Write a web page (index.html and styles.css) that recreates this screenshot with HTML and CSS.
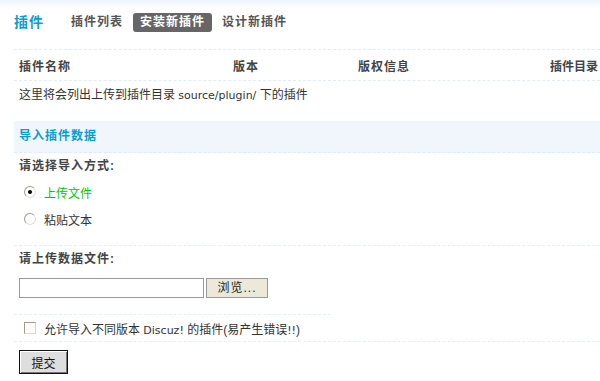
FILE: index.html
```html
<!DOCTYPE html>
<html lang="zh-CN">

<head>
    <meta charset="UTF-8">
    <title>插件</title>
    <link rel="stylesheet" href="styles.css">
</head>

<body>
    <div class="topbar">
        <h3 class="page-title">插件</h3>
        <ul class="tabs">
            <li><a href="#">插件列表</a></li>
            <li class="current"><a href="#">安装新插件</a></li>
            <li><a href="#">设计新插件</a></li>
        </ul>
    </div>

    <div class="main">
        <div class="list-head">
            <div class="cell">插件名称</div>
            <div class="cell">版本</div>
            <div class="cell">版权信息</div>
            <div class="cell last">插件目录</div>
        </div>
        <div class="list-note">这里将会列出上传到插件目录 <span class="en">source/plugin/</span> 下的插件</div>

        <div class="panel-title">导入插件数据</div>

        <div class="section">
            <div class="label">请选择导入方式:</div>
            <label class="option first">
                <span class="radio checked"></span>
                <span class="on">上传文件</span>
            </label>
            <label class="option">
                <span class="radio"></span>
                <span>粘贴文本</span>
            </label>
        </div>

        <div class="section upload">
            <div class="label">请上传数据文件:</div>
            <div class="file-row">
                <span class="file-box"></span>
                <span class="file-btn">浏览...</span>
            </div>
        </div>

        <div class="short-line"></div>
        <label class="option allow">
            <span class="checkbox"></span>
            <span>允许导入不同版本 <span class="en">Discuz!</span> 的插件(易产生错误<span class="en">!!</span>)</span>
        </label>

        <div class="submit-row">
            <button class="btn" type="button">提交</button>
        </div>
    </div>
</body>

</html>
```

FILE: styles.css
```css
body {
    margin: 0;
    font-family: "Liberation Sans", "Noto Sans CJK SC", sans-serif;
    font-size: 12px;
    color: #333;
    background: #fff;
}

/* 西文部分用类似 Verdana 的字体 */
.en {
    font-family: "DejaVu Sans", sans-serif;
    font-size: 11px;
}

/* 顶部标题和选项卡 */
.topbar {
    height: 49px;
    box-sizing: border-box;
    padding: 13px 0 0 14px;
    display: flex;
    align-items: flex-start;
    background: linear-gradient(#eef5fc, #fff 9px);
}

.page-title {
    margin: 0;
    height: 19px;
    line-height: 19px;
    font-size: 14px;
    color: #0a9dcf;
    font-weight: bold;
    letter-spacing: 1px;
}

.tabs {
    list-style: none;
    margin: 0 0 0 27px;
    padding: 0;
    display: flex;
    gap: 10px;
}

.tabs a {
    display: block;
    height: 19px;
    line-height: 19px;
    border-radius: 3px;
    color: #555;
    font-weight: bold;
    letter-spacing: 1px;
    text-decoration: none;
}

.tabs .current a {
    padding: 0 7px;
    background: #666;
    color: #fff;
}

.main {
    margin-left: 14px;
}

/* 插件列表 */
.list-head {
    display: grid;
    grid-template-columns: 214px 125px 192px 1fr;
    height: 32px;
    border-top: 1px dashed #ddeefb;
    border-bottom: 1px dashed #ddeefb;
    box-sizing: border-box;
    align-items: center;
    font-weight: bold;
    letter-spacing: 1px;
    color: #444;
}

.cell {
    padding-left: 5px;
    white-space: nowrap;
}

.cell.last {
    letter-spacing: 0;
}

.list-note {
    height: 28px;
    line-height: 28px;
    padding-left: 5px;
}

.panel-title {
    margin-top: 12px;
    height: 32px;
    line-height: 31px;
    box-sizing: border-box;
    padding-left: 5px;
    background: #f0f6fc;
    border-bottom: 1px dashed #ddeefb;
    color: #0a9dcf;
    font-weight: bold;
    letter-spacing: 1px;
}

/* 表单区域 */
.section {
    padding-bottom: 12px;
    border-bottom: 1px dashed #e3eff9;
}

.label {
    height: 26px;
    line-height: 26px;
    padding-left: 5px;
    font-weight: bold;
    letter-spacing: 1px;
    color: #444;
}

.option {
    display: flex;
    align-items: center;
    height: 28px;
    padding-left: 10px;
    gap: 8px;
}

.option.first {
    height: 26px;
}

.on {
    color: #00c800;
}

.radio {
    width: 10px;
    height: 10px;
    border-radius: 50%;
    border: 1px solid #a09d90;
    border-right-color: #e3e1d6;
    border-bottom-color: #e3e1d6;
    background: #fff;
    position: relative;
}

.radio.checked::after {
    content: "";
    position: absolute;
    left: 3px;
    top: 3px;
    width: 4px;
    height: 4px;
    border-radius: 50%;
    background: #000;
}

.upload {
    padding-bottom: 0;
    border-bottom: none;
}

.file-row {
    display: flex;
    gap: 2px;
    margin-top: 6px;
    padding-left: 5px;
    height: 20px;
}

.file-box {
    width: 183px;
    height: 18px;
    border: 1px solid #999;
    background: #fff;
}

.file-btn {
    width: 60px;
    height: 18px;
    line-height: 18px;
    border: 1px solid #999;
    background: #ece9d8;
    text-align: center;
    color: #222;
    letter-spacing: 1px;
}

.short-line {
    width: 317px;
    margin-top: 16px;
    border-top: 1px dashed #e3eff9;
}

.allow {
    height: 26px;
    border-bottom: 1px dashed #e3eff9;
}

.checkbox {
    width: 10px;
    height: 10px;
    border: 1px solid #a09d90;
    border-right-color: #dcdad0;
    border-bottom-color: #dcdad0;
    background: #fbfbf7;
}

.submit-row {
    padding: 8px 0 0 5px;
}

.btn {
    width: 49px;
    height: 24px;
    padding: 0;
    font-family: "Noto Sans CJK SC", sans-serif;
    font-size: 12px;
    color: #111;
    background: #dedede;
    border: 1px solid #111;
    box-shadow: inset 1px 1px #fff, inset -1px -1px #777;
}
```
